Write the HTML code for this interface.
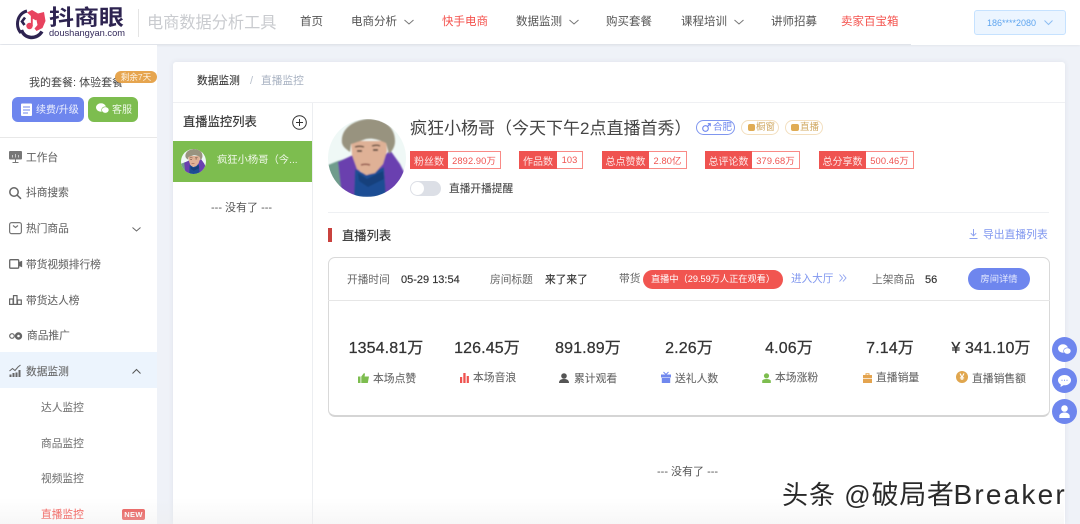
<!DOCTYPE html>
<html lang="zh">
<head>
<meta charset="utf-8">
<title>抖商眼</title>
<style>
html,body{margin:0;padding:0}
body{width:1080px;height:524px;overflow:hidden;position:relative;background:#eff2f8;font-family:"Liberation Sans","Noto Sans CJK SC",sans-serif;color:#555}
.a{position:absolute;white-space:nowrap;line-height:16px}
.b{position:absolute}
svg{position:absolute;overflow:visible}
.nav{font-size:11.500px;color:#555;top:14px}
.red{color:#f4524d}
.m{font-size:10.700px;color:#666;left:26px;-webkit-text-stroke:.08px #666}
.s{font-size:10.700px;color:#777;left:41px;-webkit-text-stroke:.08px #777}
.s.red{color:#f4524d;-webkit-text-stroke:.1px #f4524d}
.tag{position:absolute;top:151px;height:18px;box-sizing:border-box;border:1px solid #f98a86;background:#fff;font-size:9.300px;color:#ef5350;white-space:nowrap;display:flex;align-items:center;letter-spacing:.1px}
.tag i{font-style:normal;font-size:10px;letter-spacing:0;background:#ef5350;color:#fde8e7;height:18px;margin:-1px 0 -1px -1px;display:flex;align-items:center;justify-content:center;flex:none}
.tag span{flex:1;text-align:center}
.num{font-size:16px;color:#333;top:341px;text-align:center;width:100px;letter-spacing:.1px;-webkit-text-stroke:.25px #333}
.lab{font-size:10.800px;color:#666;top:370px;-webkit-text-stroke:.1px #666}
.pill{position:absolute;top:120px;height:15px;box-sizing:border-box;border-radius:8px;background:#fff;font-size:9.500px;line-height:13px;white-space:nowrap}
.v{-webkit-text-stroke:.15px #333}
.h{font-size:10.700px;color:#666;top:272px}
</style>
</head>
<body>

<!-- header -->
<div class="b" style="left:0;top:0;width:1080px;height:44px;background:#fff;box-shadow:0 1px 3px rgba(0,0,0,.09)"></div>
<div class="b" style="left:911px;top:40px;width:169px;height:5px;background:#fff"></div>

<!-- logo -->
<svg style="left:16px;top:9px" width="30" height="30" viewBox="0 0 30 30">
<path d="M11 2C5 3.500 1.500 8.500 1.500 15c0 3.500 1.200 6.500 3.500 9" fill="none" stroke="#2d2350" stroke-width="3"/>
<path d="M5.500 21c1.500 4.500 5 7 9.500 7.500 4.500 0 8.500-2 11-6" fill="none" stroke="#2d2350" stroke-width="3.400"/>
<path d="M9 8.500l-3 4 2.500 3.500" fill="none" stroke="#2d2350" stroke-width="2.600"/>
<path d="M11 3.500l5-2.500 6 3.500 6-1.500 1.500 9-3 7-6 3-2-2.500 3-3.500-1-5-5-3.500z" fill="#e8435f"/>
<circle cx="13.500" cy="17" r="3.200" fill="#e8435f"/>
<path d="M15.800 17V8l4.500 2.500" fill="none" stroke="#e8435f" stroke-width="1.900"/>
</svg>
<div class="a" style="left:49px;top:4px;font-size:21.500px;line-height:28px;font-weight:700;color:#2d2350;transform:scaleX(1.16);transform-origin:0 50%">抖商眼</div>
<div class="a" style="left:49px;top:28px;font-size:9.300px;line-height:11px;color:#33295a">doushangyan.com</div>
<div class="b" style="left:138px;top:9px;width:1px;height:28px;background:#e4e4e4"></div>
<div class="a" style="left:147px;top:13px;font-size:16.200px;line-height:20px;color:#c9cbcf">电商数据分析工具</div>

<!-- top nav -->
<div class="a nav" style="left:300px">首页</div>
<div class="a nav" style="left:351px">电商分析</div>
<svg style="left:0;top:0" width="1080" height="44" fill="none" stroke="#777" stroke-width="1">
<path d="M404.500 20l4.500 4 4.500-4M569.500 20l4.500 4 4.500-4M734.500 20l4.500 4 4.500-4"/>
</svg>
<div class="a nav red" style="left:442px">快手电商</div>
<div class="a nav" style="left:516px">数据监测</div>
<div class="a nav" style="left:606px">购买套餐</div>
<div class="a nav" style="left:681px">课程培训</div>
<div class="a nav" style="left:771px">讲师招募</div>
<div class="a nav red" style="left:841px">卖家百宝箱</div>

<!-- user box -->
<div class="b" style="left:974px;top:10px;width:92px;height:25px;background:#ecf5ff;border:1px solid #c6e2ff;box-sizing:border-box;border-radius:3px"></div>
<div class="a" style="left:987px;top:15px;font-size:9px;color:#5fa5ef">186****2080</div>
<svg style="left:1044px;top:20px" width="10" height="6" fill="none" stroke="#8dbdf2"><path d="M.5.500l4 4 4-4"/></svg>

<!-- sidebar -->
<div class="b" style="left:0;top:45px;width:157px;height:479px;background:#fff"></div>
<div class="b" style="left:0;top:352px;width:157px;height:36px;background:#ecf4fd"></div>
<div class="a" style="left:29px;top:75px;font-size:11px;color:#444">我的套餐: 体验套餐</div>
<div class="b" style="left:115px;top:71px;width:42px;height:12px;background:#e6a54f;border-radius:7px;color:#fdf3e4;font-size:8.600px;line-height:12px;text-align:center;white-space:nowrap">剩余7天</div>

<div class="b" style="left:12px;top:97px;width:72px;height:25px;background:#6e86ee;border-radius:6px"></div>
<svg style="left:20px;top:102px" width="13" height="15"><rect x="1" y="1.500" width="11" height="12.500" rx="1" fill="#fff"/><path d="M3 5h7M3 8h7M3 11h5" stroke="#6e86ee"/></svg>
<div class="a" style="left:36px;top:104px;font-size:10px;line-height:14px;color:#eef1fe">续费/升级</div>
<div class="b" style="left:88px;top:97px;width:50px;height:25px;background:#7dbd4f;border-radius:6px"></div>
<svg style="left:96px;top:103px" width="13" height="11" fill="#fff"><ellipse cx="5" cy="4.500" rx="5" ry="4.200"/><ellipse cx="9.300" cy="7" rx="3.700" ry="3.200" stroke="#7dbd4f" stroke-width=".6"/></svg>
<div class="a" style="left:112px;top:104px;font-size:10px;line-height:14px;color:#eef8e7">客服</div>
<div class="b" style="left:0;top:137px;width:157px;height:1px;background:#e8e8e8"></div>

<!-- sidebar icons -->
<svg style="left:9px;top:151px" width="13" height="12"><rect width="13" height="8.500" rx="1" fill="#777"/><path d="M6.500 8.500v3M3.500 11.500h6" stroke="#777"/><path d="M3.500 6.500V4M6.500 6.500V3M9.500 6.500V4" stroke="#ddd" stroke-width=".8"/></svg>
<svg style="left:9px;top:187px" width="13" height="12" fill="none" stroke="#666" stroke-width="1.500"><circle cx="5" cy="5" r="4.200"/><path d="M8 8l4 3.800"/></svg>
<svg style="left:9px;top:222px" width="13" height="12" fill="none" stroke="#777" stroke-width="1.200"><rect x=".6" y=".6" width="11.800" height="11" rx="2"/><path d="M4 3.500l2.500 2L9 3.500"/></svg>
<svg style="left:9px;top:259px" width="13" height="10" fill="none" stroke="#666" stroke-width="1.300"><rect x=".7" y=".7" width="9" height="8.500" rx="1"/><path d="M10.500 3.500l2-.8v4.600l-2-.8z" fill="#666"/></svg>
<svg style="left:9px;top:295px" width="13" height="10" fill="none" stroke="#666" stroke-width="1.200"><rect x=".6" y="4" width="3.500" height="5.400"/><rect x="4.500" y=".6" width="3.500" height="8.800"/><rect x="8.500" y="5" width="3.800" height="4.400"/></svg>
<svg style="left:9px;top:332px" width="14" height="8" fill="none" stroke="#666"><circle cx="3" cy="4" r="2.300" stroke-width="1.200"/><circle cx="9.500" cy="4" r="2.500" stroke-width="2.400"/></svg>
<svg style="left:9px;top:365px" width="13" height="12" fill="none" stroke="#666"><path d="M.5 6l3-2.500 2.500 2 3-3.500 2.500-2"/><path d="M1.500 12V9.500M4.500 12V8M7.500 12V7.500M10.500 12V5" stroke-width="2"/></svg>

<div class="a m" style="top:150px">工作台</div>
<div class="a m" style="top:185px">抖商搜索</div>
<div class="a m" style="top:221px">热门商品</div>
<div class="a m" style="top:257px">带货视频排行榜</div>
<div class="a m" style="top:293px">带货达人榜</div>
<div class="a m" style="top:328px;left:27px">商品推广</div>
<div class="a m" style="top:364px">数据监测</div>
<svg style="left:132px;top:227px" width="9" height="5" fill="none" stroke="#666"><path d="M.5.500L4.500 4l4-3.500"/></svg>
<svg style="left:132px;top:369px" width="9" height="5" fill="none" stroke="#555"><path d="M.5 4.500l4-4 4 4"/></svg>
<div class="a s" style="top:400px">达人监控</div>
<div class="a s" style="top:436px">商品监控</div>
<div class="a s" style="top:471px">视频监控</div>
<div class="a s red" style="top:507px">直播监控</div>
<div class="b" style="left:122px;top:509px;width:23px;height:11px;background:#ea5250;border-radius:2px;color:#fff;font-size:7.500px;font-weight:700;line-height:11px;text-align:center;letter-spacing:.3px">NEW</div>

<!-- main card -->
<div class="b" style="left:173px;top:62px;width:892px;height:462px;background:#fff;border-radius:3px 3px 0 0;box-shadow:0 0 6px rgba(40,50,80,.08)"></div>
<div class="a" style="left:197px;top:73px;font-size:10.700px;color:#333;-webkit-text-stroke:.08px #333">数据监测</div>
<div class="a" style="left:250px;top:73px;font-size:11px;color:#b8c0cc">/</div>
<div class="a" style="left:261px;top:73px;font-size:10.700px;color:#a8b2c2">直播监控</div>
<div class="b" style="left:173px;top:102px;width:892px;height:1px;background:#eff0f3"></div>
<div class="b" style="left:312px;top:103px;width:1px;height:421px;background:#eceef1"></div>

<!-- list column -->
<div class="a" style="left:183px;top:114px;font-size:12.300px;color:#333;-webkit-text-stroke:.15px #333">直播监控列表</div>
<svg style="left:292px;top:115px" width="15" height="15" fill="none" stroke="#333"><circle cx="7.500" cy="7.500" r="6.800"/><path d="M4 7.500h7M7.500 4v7"/></svg>
<div class="b" style="left:173px;top:141px;width:139px;height:41px;background:#7dbd4f"></div>
<svg style="left:181px;top:149px" width="25" height="25" viewBox="0 0 78 78">
<use href="#av"/>
</svg>
<div class="a" style="left:217px;top:153px;font-size:10.300px;color:#f1f8ea">疯狂小杨哥（今...</div>
<div class="a" style="left:211px;top:200px;font-size:11px;color:#555">--- 没有了 ---</div>

<!-- avatar -->
<svg style="left:328px;top:119px" width="78" height="78" viewBox="0 0 78 78">
<defs>
<clipPath id="cp"><circle cx="39" cy="39" r="39"/></clipPath>
<filter id="bl" x="-5%" y="-5%" width="110%" height="110%"><feGaussianBlur stdDeviation=".8"/></filter>
<g id="av" clip-path="url(#cp)">
<rect width="78" height="78" fill="#eff8f6"/>
<g filter="url(#bl)">
<path d="M0 46l10-4 14-4 8 20-4 20H0z" fill="#6f9c8c"/>
<path d="M10 43l15-7 12 28-3 14H14z" fill="#6b3fae"/>
<path d="M50 44l12-13 10 14 6 12-6 21H50z" fill="#6a3fb0"/>
<path d="M26 78l1-28 12 6 17-8 2 30z" fill="#1b4d94"/>
<path d="M30 54l9 6 16-8 1 8-16 8-9-6z" fill="#163f7c"/>
<path d="M23 22h35l1 10-4 13-8 9-9 2-9-6-5-14z" fill="#dfb196"/>
<path d="M14 24C12 8 29 0 42 0c15 0 25 9 25 22 0 5-2 9-6 13l-3-11c-9-4-14-5-20-4-6 2-11 4-15 5l-1 8c-4-3-7-5-8-9z" fill="#98937f"/>
<path d="M27 28c3-1 6-1 9 0M44 27c3-1 6-1 8 0" stroke="#4f3a2e" stroke-width="1.400" fill="none"/>
<path d="M29 32h5M45 31h5" stroke="#33251e" stroke-width="1.500"/>
<path d="M33 46c3-1 6-1 9 0" stroke="#8c4f45" stroke-width="1.600" fill="none"/>
</g>
</g>
</defs>
<use href="#av"/>
</svg>

<!-- name line -->
<div class="a" style="left:410px;top:119px;font-size:17px;line-height:20px;color:#444">疯狂小杨哥（今天下午2点直播首秀）</div>
<div class="pill" style="left:696px;border:1px solid #7f96ef;color:#6e86ee;width:39px">
<svg style="left:5px;top:2px" width="9" height="9" fill="none" stroke="#6e86ee" stroke-width="1.100"><circle cx="3.500" cy="5.500" r="2.800"/><path d="M5.500 3.500L8.300.7M5.800.7h2.500v2.500"/></svg>
<span style="position:absolute;left:16px;top:0">合肥</span></div>
<div class="pill" style="left:741px;border:1px solid #f3dfbf;color:#d0a862;width:38px">
<div class="b" style="left:6px;top:3px;width:7px;height:7px;background:#e0ac55;border-radius:2px"></div>
<span style="position:absolute;left:14px;top:0">橱窗</span></div>
<div class="pill" style="left:785px;border:1px solid #f3dfbf;color:#d0a862;width:38px">
<div class="b" style="left:5px;top:3px;width:8px;height:7px;background:#e0ac55;border-radius:2px"></div>
<span style="position:absolute;left:14px;top:0">直播</span></div>

<!-- tags -->
<div class="tag" style="left:410px;width:91px"><i style="width:38px">粉丝数</i><span>2892.90万</span></div>
<div class="tag" style="left:519px;width:64px"><i style="width:38px">作品数</i><span>103</span></div>
<div class="tag" style="left:602px;width:85px"><i style="width:47px">总点赞数</i><span>2.80亿</span></div>
<div class="tag" style="left:705px;width:95px"><i style="width:47px">总评论数</i><span>379.68万</span></div>
<div class="tag" style="left:819px;width:95px"><i style="width:47px">总分享数</i><span>500.46万</span></div>

<!-- toggle -->
<div class="b" style="left:410px;top:181px;width:31px;height:15px;background:#dcdfe6;border-radius:8px"></div>
<div class="b" style="left:411px;top:182px;width:13px;height:13px;background:#fff;border-radius:50%"></div>
<div class="a" style="left:449px;top:181px;font-size:10.700px;color:#444;-webkit-text-stroke:.08px #444">直播开播提醒</div>

<div class="b" style="left:328px;top:212px;width:721px;height:1px;background:#eef0f3"></div>

<!-- list section title -->
<div class="b" style="left:328px;top:228px;width:4px;height:14px;background:#c9423e"></div>
<div class="a" style="left:342px;top:228px;font-size:12.300px;color:#333;-webkit-text-stroke:.15px #333">直播列表</div>
<svg style="left:969px;top:229px" width="10" height="11" fill="none" stroke="#8ea2f0"><path d="M4.500 0v6.500M1.800 4.200l2.700 2.600 2.700-2.600M.5 9.500h8"/></svg>
<div class="a" style="left:983px;top:227px;font-size:10.800px;color:#7f96ef">导出直播列表</div>

<!-- live card -->
<div class="b" style="left:328px;top:257px;width:722px;height:160px;border:1px solid #d9d9d9;border-bottom:2px solid #d5d5d5;box-sizing:border-box;border-radius:7px"></div>
<div class="b" style="left:328px;top:300px;width:722px;height:1px;background:#e6e6e6"></div>
<div class="a h" style="left:347px">开播时间</div>
<div class="a h v" style="left:401px;font-size:11px;color:#333">05-29 13:54</div>
<div class="a h" style="left:490px">房间标题</div>
<div class="a h v" style="left:545px;color:#333">来了来了</div>
<div class="a h" style="left:619px;top:271px">带货</div>
<div class="b" style="left:643px;top:270px;width:140px;height:19px;background:#f15550;border-radius:10px;color:#fff;font-size:9.200px;line-height:19px;text-align:center;white-space:nowrap">直播中（29.59万人正在观看）</div>
<div class="a" style="left:791px;top:271px;font-size:10.600px;color:#7f96ef">进入大厅</div>
<svg style="left:839px;top:274px" width="8" height="9" fill="none" stroke="#8ea2f0" stroke-width=".9"><path d="M.5.500l3 3.500-3 3.500M4 .5l3 3.500-3 3.500"/></svg>
<div class="a h" style="left:872px">上架商品</div>
<div class="a h v" style="left:925px;font-size:11px;color:#333">56</div>
<div class="b" style="left:968px;top:268px;width:62px;height:22px;background:#6e86ee;border-radius:11px;color:#e8ecfd;font-size:9.300px;line-height:22px;text-align:center">房间详情</div>

<!-- stats -->
<div class="a num" style="left:336px">1354.81万</div>
<div class="a num" style="left:437px">126.45万</div>
<div class="a num" style="left:538px">891.89万</div>
<div class="a num" style="left:639px">2.26万</div>
<div class="a num" style="left:739px">4.06万</div>
<div class="a num" style="left:840px">7.14万</div>
<div class="a num" style="left:941px">¥ 341.10万</div>

<svg style="left:358px;top:373px" width="11" height="10" fill="#7dbd4f"><rect y="3.500" width="2.500" height="6.500"/><path d="M3.300 3.500L6 0l1 .8-.4 2.700H11l-1.200 6.500H3.300z"/></svg>
<div class="a lab" style="left:373px;top:371px">本场点赞</div>
<svg style="left:460px;top:373px" width="9" height="10" fill="#ef5350"><rect y="4" width="2.200" height="6"/><rect x="3.300" width="2.300" height="10"/><rect x="6.700" y="3" width="2.200" height="7"/></svg>
<div class="a lab" style="left:473px">本场音浪</div>
<svg style="left:559px;top:373px" width="10" height="10" fill="#555"><circle cx="5" cy="3" r="2.800"/><path d="M0 10c0-3 2-4 5-4s5 1 5 4z"/></svg>
<div class="a lab" style="left:574px;top:371px">累计观看</div>
<svg style="left:661px;top:372px" width="10" height="11" fill="#7088ee"><rect y="2.500" width="10" height="3"/><rect x=".8" y="6" width="8.400" height="5"/><path d="M5 2.500L2.500 0M5 2.500L7.500 0" stroke="#7088ee" fill="none"/></svg>
<div class="a lab" style="left:675px;top:371px">送礼人数</div>
<svg style="left:762px;top:373px" width="9" height="10" fill="#7dbd4f"><circle cx="4.500" cy="2.800" r="2.600"/><path d="M.2 10V7.500C1 6.500 2.500 6 4.500 6s3.500.5 4.300 1.500V10z"/></svg>
<div class="a lab" style="left:775px">本场涨粉</div>
<svg style="left:863px;top:373px" width="9" height="10" fill="#e4a44f"><path d="M3 2V.8h3V2" fill="none" stroke="#e4a44f"/><rect y="2" width="9" height="3.300"/><rect y="6" width="9" height="4"/></svg>
<div class="a lab" style="left:876px">直播销量</div>
<div class="b" style="left:956px;top:371px;width:12px;height:12px;background:#e0a64e;border-radius:50%;color:#fff;font-size:9px;line-height:12px;text-align:center;font-weight:700">¥</div>
<div class="a lab" style="left:972px;top:371px">直播销售额</div>

<div class="a" style="left:657px;top:464px;font-size:11px;color:#555">--- 没有了 ---</div>

<!-- floating buttons -->
<div class="b" style="left:1052px;top:337px;width:25px;height:25px;border-radius:50%;background:#6e86ee"></div>
<svg style="left:1058px;top:344px" width="13" height="11" fill="#fff"><ellipse cx="5" cy="4.500" rx="5" ry="4.200"/><ellipse cx="9.300" cy="7" rx="3.700" ry="3.200" stroke="#6e86ee" stroke-width=".6"/></svg>
<div class="b" style="left:1052px;top:368px;width:25px;height:25px;border-radius:50%;background:#6e86ee"></div>
<svg style="left:1058px;top:375px" width="13" height="12"><path d="M6.500 0C2.900 0 0 2.300 0 5.200c0 1.800 1.100 3.400 2.800 4.300L2.500 12l3-1.800c.3 0 .7.100 1 .1 3.600 0 6.500-2.300 6.500-5.100S10.100 0 6.500 0z" fill="#fff"/><path d="M3.500 5.200h1M6 5.200h1M8.500 5.200h1" stroke="#6e86ee"/></svg>
<div class="b" style="left:1052px;top:399px;width:25px;height:25px;border-radius:50%;background:#6e86ee"></div>
<svg style="left:1059px;top:405px" width="11" height="13" fill="#fff"><circle cx="5.500" cy="3.500" r="3.300"/><path d="M.3 13v-2.500C1 8.500 3 7.500 5.500 7.500s4.500 1 5.200 3V13z"/></svg>

<!-- bottom fade -->
<div class="b" style="left:0;top:498px;width:1064px;height:26px;background:linear-gradient(rgba(235,235,235,0),rgba(235,235,235,.4));pointer-events:none"></div>

<!-- watermark -->
<div class="a" style="left:782px;top:480px;font-size:26px;line-height:30px;color:#2a2a2a;text-shadow:1px 1px 0 #fff,-1px -1px 0 #fff;letter-spacing:1px">头条 @<span style="font-size:27px;letter-spacing:.6px">破局者</span><span style="font-size:28px;letter-spacing:2.200px;margin-left:-1px">Breaker</span></div>

</body>
</html>
